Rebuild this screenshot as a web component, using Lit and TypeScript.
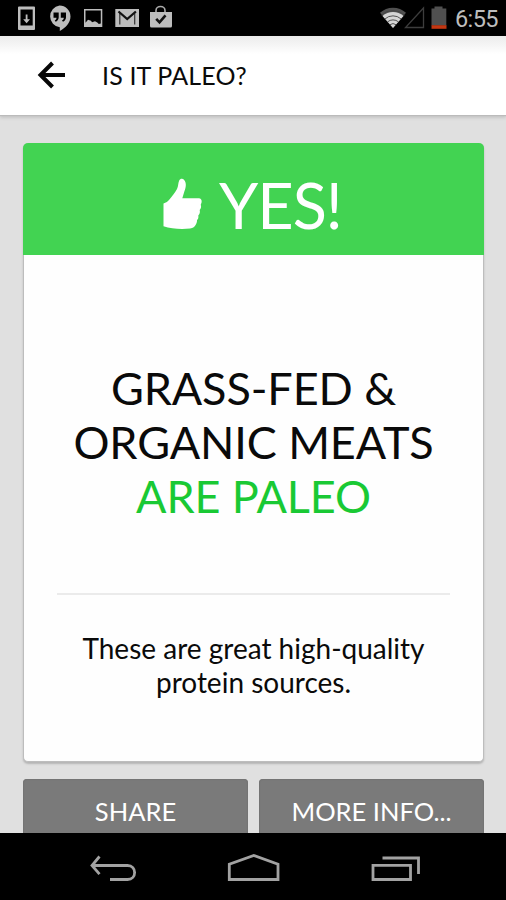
import { LitElement, html, css } from "lit";
import { customElement } from "lit/decorators.js";

@customElement("status-bar")
class StatusBar extends LitElement {
  static styles = css`
    :host { display: flex; height: 36px; background: #000; justify-content: space-between; align-items: stretch; color: #bdbdbd; }
    svg { display: block; }
    .right { display: flex; }
    .time { font: 23.500px/36px Roboto, sans-serif; letter-spacing: -.6px; width: 51px; white-space: nowrap; padding-top: 1px; box-sizing: border-box; }
  `;
  render() {
    return html`
      <svg width="180" height="36" viewBox="0 0 180 36" fill="#bdbdbd">
        <path fill-rule="evenodd" d="M19 6.500h15a1 1 0 0 1 1 1V29a1 1 0 0 1-1 1H19a1 1 0 0 1-1-1V7.500a1 1 0 0 1 1-1zM20.500 9.500v16h12.200v-16zM25.700 14.500h1.800v4.800h2.500l-3.400 4-3.400-4h2.500z" />
        <path fill-rule="evenodd" d="M59.500 5.500a11 11 0 0 1 11 11c0 6-5 11.500-10.700 14.500v-3.700A11 11 0 0 1 59.500 5.500zM53.500 12.500v5.200h3c0 1.500-.8 2.300-1.800 2.800l1 1.300c2-1 3-2.600 3-4.500v-4.800zM60.800 12.500v5.200h3c0 1.500-.8 2.300-1.800 2.800l1 1.300c2-1 3-2.600 3-4.500v-4.800z" />
        <path fill-rule="evenodd" d="M84 9h18.300v18H84zM85.500 10.500v12.300l2.500-3 3 1 1 1.500 3-1 2.300 1.200 1.500 1.500 2-.5v-13z" />
        <path d="M115.300 9h23.700v18h-23.700z" />
        <path d="M119.800 24.500V13M134.700 24.500V13" fill="none" stroke="#333" stroke-width="1.200" />
        <path d="M118.500 11.500l8.700 7.500 8.700-7.500" fill="none" stroke="#111" stroke-width="2.300" />
        <path d="M150 12h22v14a1.500 1.500 0 0 1-1.500 1.500h-19a1.500 1.500 0 0 1-1.500-1.500z" />
        <path d="M156 12v-1.500a4.500 4 0 0 1 9 0V12" fill="none" stroke="#aaa" stroke-width="1.600" />
        <path d="M156.200 18.800l3.300 3.500 6-7" fill="none" stroke="#111" stroke-width="2.600" />
      </svg>
      <div class="right">
        <svg width="75" height="36" viewBox="380 0 75 36">
          <path d="M380 12.800a19 19 0 0 1 26 0L393 28z" fill="#505050" />
          <path d="M382.500 16a15.500 15.500 0 0 1 21 0L393 28z" fill="#d5d5d5" />
          <path d="M381.500 15.200a16.500 16.500 0 0 1 23 0M385 18.900a12 12 0 0 1 16 0M387.500 21.900a8.500 8.500 0 0 1 11 0M390 24.700a5 5 0 0 1 6 0" fill="none" stroke="#444" stroke-width=".9" />
          <path d="M405.500 27.500h18V8z" fill="none" stroke="#3d3d3d" stroke-width="1.300" />
          <path d="M431.500 8.500h3V6.500h8v2h3.800v17h-14.800z" fill="#505050" />
          <path d="M431.500 25.200H446.500V28.800h-15z" fill="#c33712" />
        </svg>
        <div class="time">6:55</div>
      </div>`;
  }
}

@customElement("nav-bar")
class NavBar extends LitElement {
  static styles = css`
    :host { display: block; height: 67px; background: #000; flex: none; }
    svg { display: block; }
  `;
  render() {
    return html`<svg width="506" height="67" viewBox="0 833 506 67" fill="none" stroke="#a2a2a2" stroke-width="2.800">
      <path d="M99.500 856.500l-7.500 9 7.500 8.700M92 865.500h35.500c9.500 0 9.500 14 0 14H110" />
      <path d="M229.300 879.500v-15.300l24.500-8.700 24.200 8.700v15.300z" />
      <path d="M373 865.300h37.500v14.200H373zM382.500 858h36v16" />
    </svg>`;
  }
}

@customElement("app-root")
class AppRoot extends LitElement {
  static styles = css`
    :host { display: flex; flex-direction: column; width: 506px; height: 900px; overflow: hidden; background: #e0e0e0; font-family: Lato, sans-serif; color: #0a0a0a; }
    svg { display: block; flex: none; }
    .toolbar { height: 79px; flex: none; box-sizing: border-box; display: flex; align-items: center; padding-left: 36px; background: linear-gradient(#ececec, #f6f6f6 10px, #fff 18px); box-shadow: 0 1px 1px #bbb, 0 3px 3px #c6c6c6; }
    .title { margin-left: 36px; font-size: 25px; letter-spacing: .15px; white-space: nowrap; padding-bottom: 1px; }
    main { flex: 1; min-height: 0; overflow: hidden; padding: 28px 22px 0 23px; display: flex; flex-direction: column; }
    .card { flex: none; height: 619px; border-radius: 5px; background: #fefefe; box-sizing: border-box; border: 1px solid #bdbdbd; border-top: 0; box-shadow: 0 2px 2px #b5b5b5; display: flex; flex-direction: column; }
    .answer { height: 112px; margin: 0 -1px; flex: none; border-radius: 5px 5px 0 0; background: #42d352; color: #fff; display: flex; align-items: center; padding-left: 139px; box-sizing: border-box; }
    .thumb { margin-top: 9px; }
    .yes { font-size: 63px; line-height: 112px; letter-spacing: -1px; margin-left: 15px; padding-top: 12px; white-space: nowrap; }
    .verdict { margin-top: 106px; text-align: center; font-size: 45px; line-height: 54px; letter-spacing: -.1px; white-space: nowrap; }
    .ok { color: #19c934; }
    .rule { height: 2px; margin: 70px 33px 0; background: #ebebeb; }
    .note { margin-top: 37px; text-align: center; font-size: 28px; line-height: 33.500px; white-space: nowrap; }
    .actions { display: flex; gap: 11px; margin-top: 17px; }
    .button { flex: 1; height: 67px; flex-shrink: 0; box-sizing: border-box; border-radius: 4px; background: #7a7a7a; box-shadow: inset 0 0 1px 1px #747474; color: #fff; text-align: center; font-size: 25.500px; line-height: 64px; white-space: nowrap; }
  `;
  render() {
    return html`
      <status-bar></status-bar>
      <div class="toolbar">
        <svg width="30" height="30" viewBox="36 61 30 30" fill="none" stroke="#080808" stroke-width="4"><path d="M52.500 63L40.500 75l12 12M40 75h25" /></svg>
        <div class="title">IS IT PALEO?</div>
      </div>
      <main>
        <div class="card">
          <div class="answer">
            <svg class="thumb" width="42" height="54" viewBox="162 176 42 54" fill="#fff">
              <path d="M163.500 202.500q4-1.500 5.500-3.500c3-4 6-7 8-11 1.500-3 1-6 2.200-8.500 1-2 3.500-2.200 5-.5 2.500 3 1.800 7.500.3 11l-2.200 7.300h16.500c2 0 3.300 1.700 2.800 4-.2 1.300-.8 1.700-.8 2.700.6 1.700.3 3.500-1.100 5 .5 2 .1 4-1.400 5.500.3 2 0 3.500-1.300 4.500.1 1.800-.3 3-1 4.300-1.300 2.700-2.900 3.900-5.900 4.200-9.500.9-19 .2-26.600-2.200z" />
            </svg>
            <div class="yes">YES!</div>
          </div>
          <div class="verdict">GRASS-FED &amp;<br />ORGANIC MEATS<br /><span class="ok">ARE PALEO</span></div>
          <div class="rule"></div>
          <div class="note">These are great high-quality<br />protein sources.</div>
        </div>
        <div class="actions">
          <div class="button">SHARE</div>
          <div class="button">MORE INFO...</div>
        </div>
      </main>
      <nav-bar></nav-bar>`;
  }
}
